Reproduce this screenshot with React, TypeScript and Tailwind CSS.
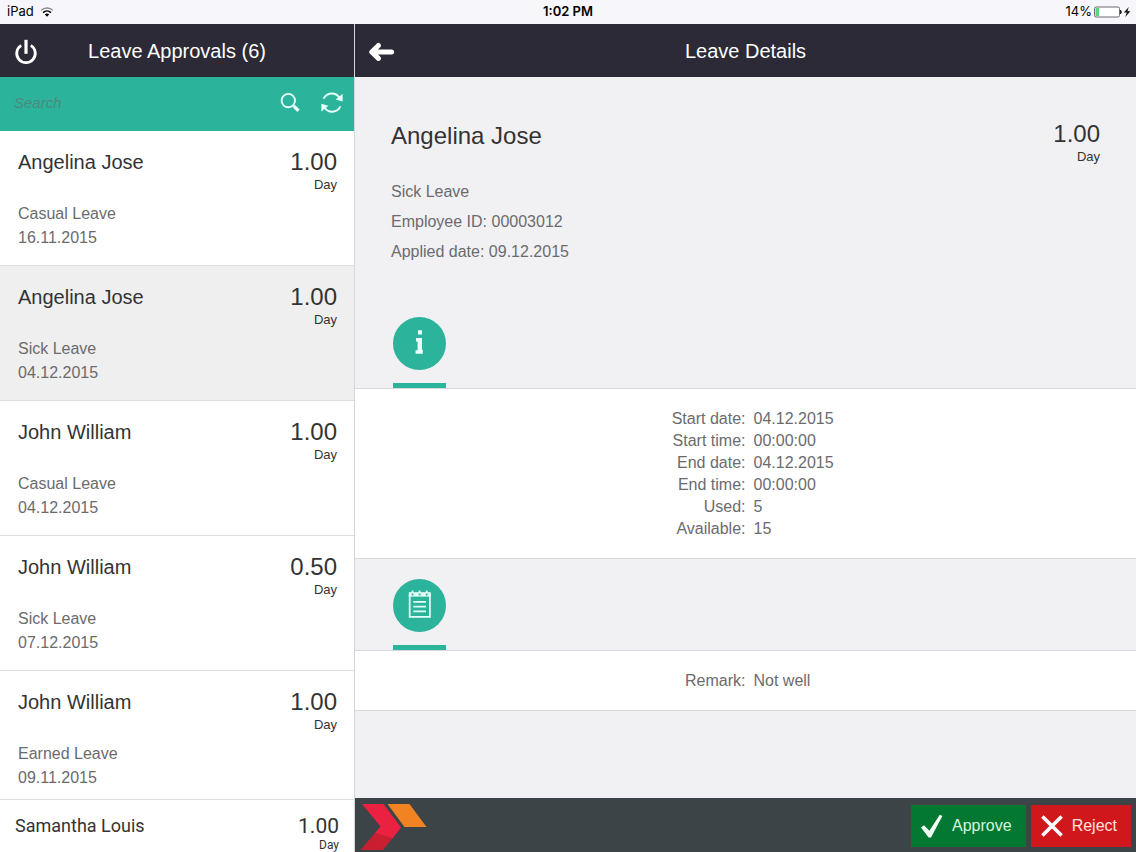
import { useState } from "react";

interface LeaveRequest {
  id: number;
  name: string;
  days: string;
  type: string;
  date: string;
}

const REQUESTS: LeaveRequest[] = [
  { id: 1, name: "Angelina Jose", days: "1.00", type: "Casual Leave", date: "16.11.2015" },
  { id: 2, name: "Angelina Jose", days: "1.00", type: "Sick Leave", date: "04.12.2015" },
  { id: 3, name: "John William", days: "1.00", type: "Casual Leave", date: "04.12.2015" },
  { id: 4, name: "John William", days: "0.50", type: "Sick Leave", date: "07.12.2015" },
  { id: 5, name: "John William", days: "1.00", type: "Earned Leave", date: "09.11.2015" },
];

const DETAILS = [
  { label: "Start date:", value: "04.12.2015" },
  { label: "Start time:", value: "00:00:00" },
  { label: "End date:", value: "04.12.2015" },
  { label: "End time:", value: "00:00:00" },
  { label: "Used:", value: "5" },
  { label: "Available:", value: "15" },
];

const REMARKS = [{ label: "Remark:", value: "Not well" }];

function StatusBar() {
  return (
    <div className="grid h-6 shrink-0 grid-cols-3 items-center bg-[#f7f6fa] px-[7px] font-['Inter',sans-serif] text-[13px] text-black">
      <div className="flex items-center gap-[6px]">
        <span>iPad</span>
        <svg viewBox="0 0 14 10" className="h-[10px] w-[14px]" fill="none">
          <path d="M1 3.4C4.4.2 9.6.2 13 3.4" stroke="#8a8a8e" strokeWidth="1.3" />
          <path d="M3 5.6C5.3 3.5 8.7 3.5 11 5.6" stroke="#000" strokeWidth="1.6" />
          <path d="M4.8 7.2C6 6.1 8 6.1 9.2 7.2L7 9.7Z" fill="#000" />
        </svg>
      </div>
      <div className="text-center font-semibold">1:02 PM</div>
      <div className="flex items-center justify-end gap-[2px]">
        <span>14%</span>
        <svg viewBox="0 0 37 12" className="-mr-[2px] h-3 w-[37px]">
          <rect x="0.5" y="1" width="25" height="10" rx="1.5" fill="#fff" stroke="#6d6d70" />
          <rect x="1.5" y="2" width="3.6" height="8" fill="#5fd07c" />
          <path d="M26.5 4Q28.3 6 26.5 8Z" fill="#222" stroke="#222" />
          <path d="M34.8 1L29.8 6.6H32.8L31.2 11L36.4 5.3H33.4Z" fill="#111" />
        </svg>
      </div>
    </div>
  );
}

function DayCount({ days }: { days: string }) {
  return (
    <span className="flex flex-col items-end text-[#333]">
      <span className="text-2xl leading-7">{days}</span>
      <span className="text-[13px] leading-[18px]">Day</span>
    </span>
  );
}

function RequestRow({
  request,
  selected,
  onSelect,
}: {
  request: LeaveRequest;
  selected: boolean;
  onSelect: () => void;
}) {
  return (
    <li>
      <button
        onClick={onSelect}
        className={`flex h-[135px] w-full justify-between border-b border-[#dedee2] pt-[17px] pr-[17px] pl-[18px] text-left ${
          selected ? "bg-[#efeff0]" : "bg-white"
        }`}
      >
        <span className="flex flex-col">
          <span className="mb-[26px] text-xl leading-7 text-[#333]">{request.name}</span>
          <span className="text-base leading-6 text-[#6b6b6e]">{request.type}</span>
          <span className="text-base leading-6 text-[#6b6b6e]">{request.date}</span>
        </span>
        <DayCount days={request.days} />
      </button>
    </li>
  );
}

function Sidebar({
  selectedId,
  onSelect,
}: {
  selectedId: number;
  onSelect: (id: number) => void;
}) {
  return (
    <aside className="flex w-[355px] shrink-0 flex-col border-r border-[#d5d5da] bg-white">
      <header className="relative flex h-[53px] shrink-0 items-center justify-center bg-[#2b2a36] text-white">
        <button aria-label="Log out" className="absolute left-[14px]">
          <svg viewBox="0 0 24 28" className="h-7 w-6" fill="none" stroke="#fff" strokeWidth="2.8">
            <path d="M7.2 8.4A9.3 9.3 0 1 0 16.8 8.4" />
            <path d="M12 2.8V16.8" strokeWidth="3.2" />
          </svg>
        </button>
        <h1 className="text-xl">Leave Approvals (6)</h1>
      </header>
      <div className="flex h-[54px] shrink-0 items-center gap-[18px] bg-[#2cb39b] pr-[10px] pb-[2px] pl-[14px]">
        <input
          type="search"
          aria-label="Search"
          placeholder="Search"
          className="min-w-0 flex-1 bg-transparent text-[15px] text-white italic outline-none placeholder:text-[#4f897e]"
        />
        <button aria-label="Find">
          <svg viewBox="0 0 24 24" className="size-6" fill="none" stroke="#e4fff9">
            <circle cx="10.3" cy="9.6" r="6.7" strokeWidth="1.9" />
            <path d="M15 14.2L16.8 16" strokeWidth="2" />
            <path d="M16.2 15.6L20.6 19.8" strokeWidth="3.4" />
          </svg>
        </button>
        <button aria-label="Refresh">
          <svg viewBox="0 0 24 24" className="size-6" fill="none" stroke="#e4fff9" strokeWidth="2">
            <path d="M3.6 7.6C6.8 1.2 15.4.6 19.2 6.4" />
            <path d="M20.4 15.4C17.2 22 8.6 22.6 4.8 16.8" />
            <path d="M22.6 2.8V10.4L15.6 8.4Z" fill="#e4fff9" stroke="none" />
            <path d="M1.4 20.4V12.8L8.4 14.8Z" fill="#e4fff9" stroke="none" />
          </svg>
        </button>
      </div>
      <ul className="min-h-0 flex-1 overflow-hidden">
        {REQUESTS.map((request) => (
          <RequestRow
            key={request.id}
            request={request}
            selected={request.id === selectedId}
            onSelect={() => onSelect(request.id)}
          />
        ))}
      </ul>
      {/* next request, partly scrolled into view */}
      <button
        onClick={() => onSelect(6)}
        className="flex h-[53px] shrink-0 items-start justify-between border-t border-[#dedee2] pt-[14px] pr-[15px] pl-[15px] font-['Roboto',sans-serif] text-[#333]"
      >
        <span className="text-[18px] leading-6">Samantha Louis</span>
        <span className="flex flex-col items-end">
          <span className="text-[21px] leading-6">1.00</span>
          <span className="text-xs leading-[14px]">Day</span>
        </span>
      </button>
    </aside>
  );
}

function InfoIcon() {
  return (
    <svg viewBox="0 0 53 53" className="size-[53px]">
      <circle cx="26.5" cy="26.5" r="26.5" fill="#2cb39b" />
      <path
        d="M25 13.2H29V17.4H25ZM23 21H29V32.8H29.8V36.8H22.6V33.2H24.6V24.6H23Z"
        fill="#e9fffa"
      />
    </svg>
  );
}

function NotesIcon() {
  return (
    <svg viewBox="0 0 53 53" className="size-[53px]">
      <circle cx="26.5" cy="26.5" r="26.5" fill="#2cb39b" />
      <g fill="none" stroke="#e4fff9">
        <path d="M16.7 15V37.8H36.9V15" strokeWidth="1.8" />
        <path d="M15.8 15.4H37.8" strokeWidth="4.4" />
        <path d="M19.5 11.6V15M26.6 11.6V15M33.7 11.6V15" strokeWidth="1.8" />
        <path d="M20.3 22.8H33M20.3 27.6H33M20.3 32.4H33" strokeWidth="1.8" />
      </g>
      <path d="M18.6 14.6H20.4V16.4H18.6ZM25.7 14.6H27.5V16.4H25.7ZM32.8 14.6H34.6V16.4H32.8Z" fill="#2cb39b" />
    </svg>
  );
}

function FieldList({ fields }: { fields: { label: string; value: string }[] }) {
  return (
    <dl className="border-y border-[#d9d9dd] bg-white pt-[19px] pb-[18px] text-base leading-[22px] text-[#6b6b6e]">
      {fields.map(({ label, value }) => (
        <div key={label} className="grid grid-cols-[50%_1fr] gap-x-2">
          <dt className="text-right">{label}</dt>
          <dd>{value}</dd>
        </div>
      ))}
    </dl>
  );
}

function SectionTab({ label, children }: { label: string; children: React.ReactNode }) {
  return (
    <button aria-label={label} className="mx-[38px] mt-5 block w-[53px] border-b-[5px] border-[#2cb39b] pb-[13px]">
      {children}
    </button>
  );
}

function Logo() {
  return (
    <svg viewBox="0 0 68 54" className="ml-[5px] h-[54px] w-[68px]">
      <path d="M2 6H23.5L41 29.5L32 41L14.5 35.5L20.5 28.5Z" fill="#ea2140" />
      <path d="M15 35L32.5 40L23 52H0.5Z" fill="#c91f31" />
      <path d="M27.5 6H49.5L66.5 29H44.5Z" fill="#f28322" />
    </svg>
  );
}

function Details() {
  return (
    <main className="flex min-w-0 flex-1 flex-col bg-[#f1f1f4]">
      <header className="relative flex h-[53px] shrink-0 items-center justify-center bg-[#2b2a36] text-white">
        <button aria-label="Back" className="absolute left-[13px]">
          <svg
            viewBox="0 0 28 20"
            className="h-5 w-7"
            fill="none"
            stroke="#fff"
            strokeWidth="5"
            strokeLinecap="round"
            strokeLinejoin="round"
          >
            <path d="M10.4 4.4L3.8 11L10.4 17.4M5 11H23.6" />
          </svg>
        </button>
        <h2 className="text-xl">Leave Details</h2>
      </header>

      <div className="min-h-0 flex-1 overflow-hidden">
        <div className="flex items-start justify-between px-9 pt-[43px] pb-[30px]">
          <div>
            <h3 className="mb-[25px] text-2xl leading-8 text-[#333]">Angelina Jose</h3>
            <div className="text-base leading-[30px] text-[#6b6b6e]">
              <p>Sick Leave</p>
              <p>Employee ID: 00003012</p>
              <p>Applied date: 09.12.2015</p>
            </div>
          </div>
          <DayCount days="1.00" />
        </div>
        <SectionTab label="Information">
          <InfoIcon />
        </SectionTab>
        <FieldList fields={DETAILS} />
        <SectionTab label="Notes">
          <NotesIcon />
        </SectionTab>
        <FieldList fields={REMARKS} />
      </div>

      <footer className="flex h-[54px] shrink-0 items-center bg-[#3d4448] pr-[5px]">
        <Logo />
        <div className="mt-[2px] ml-auto flex gap-[5px] text-base">
          <button className="flex h-[42px] items-center gap-[9px] bg-[#027832] pr-[14px] pl-[10px] text-[#d5f7dc]">
            <svg viewBox="0 0 22 24" className="h-6 w-[22px]" fill="#f4fff4">
              <path d="M0 13.5L3 11.2L8.4 16.8L18.8 0.8L21.4 2L10 23.4H7.6Z" />
            </svg>
            Approve
          </button>
          <button className="flex h-[42px] items-center gap-[9px] bg-[#d0181c] pr-[14px] pl-[10px] text-[#ffe2dc]">
            <svg viewBox="0 0 22 22" className="size-[22px]" stroke="#fff" strokeWidth="3.6">
              <path d="M1.4 1.4L20.6 20.6M20.6 1.4L1.4 20.6" />
            </svg>
            Reject
          </button>
        </div>
      </footer>
    </main>
  );
}

export default function App() {
  const [selectedId, setSelectedId] = useState(2);

  return (
    <div className="flex h-screen flex-col overflow-hidden font-['Liberation_Sans',Arial,sans-serif]">
      <StatusBar />
      <div className="flex min-h-0 flex-1">
        <Sidebar selectedId={selectedId} onSelect={setSelectedId} />
        <Details />
      </div>
    </div>
  );
}
